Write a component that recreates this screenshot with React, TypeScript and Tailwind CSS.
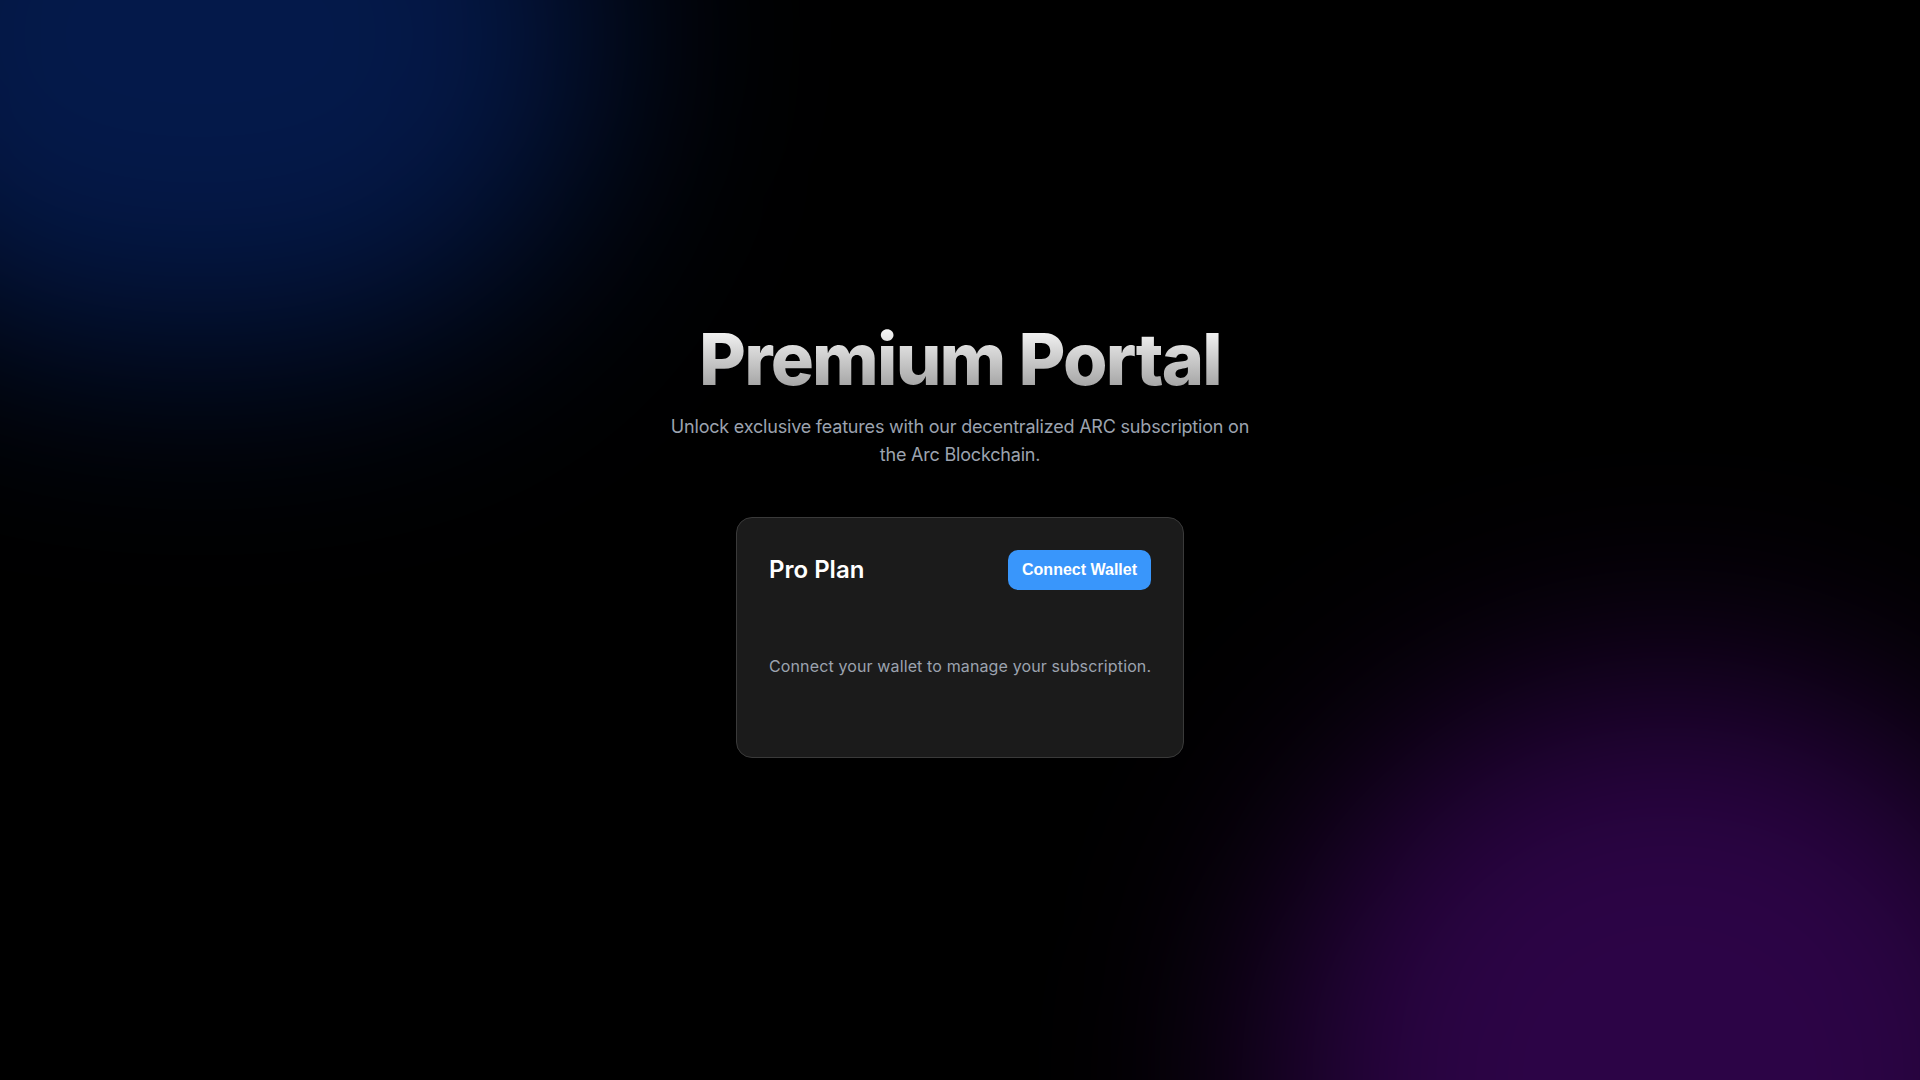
import React from "react";

export default function App() {
  return (
    <div className="relative min-h-screen w-full overflow-hidden bg-black font-['Inter',sans-serif] text-white">
      {/* background glows */}
      <div className="pointer-events-none absolute left-[-200px] top-[-280px] h-[630px] w-[800px] rounded-full bg-[#04194a] blur-[110px]" />
      <div className="pointer-events-none absolute left-[1270px] top-[680px] h-[800px] w-[800px] rounded-full bg-[#2c0446] blur-[110px]" />

      <main className="relative flex min-h-screen flex-col items-center justify-center">
        <h1 className="bg-gradient-to-b from-white to-[#9a9a9a] bg-clip-text text-7xl font-extrabold tracking-tight text-transparent">
          Premium Portal
        </h1>
        <p className="mt-[18px] max-w-[590px] text-center text-lg tracking-[-0.011em] text-[#9ca3af]">
          Unlock exclusive features with our decentralized ARC subscription on the Arc Blockchain.
        </p>

        <section className="mt-12 w-[448px] rounded-2xl border border-[#3a3a3a] bg-[#1b1b1b] p-8">
          <div className="flex items-center justify-between">
            <h2 className="text-2xl font-semibold text-white">Pro Plan</h2>
            <button
              type="button"
              className="rounded-[10px] bg-[#3996fb] px-3.5 py-[10px] font-['Liberation_Sans',Arial,sans-serif] text-base font-bold leading-5 text-white"
            >
              Connect Wallet
            </button>
          </div>
          <p className="mb-[47px] mt-16 whitespace-nowrap text-center text-base tracking-[0.008em] text-[#9ca3af]">
            Connect your wallet to manage your subscription.
          </p>
        </section>
      </main>
    </div>
  );
}
